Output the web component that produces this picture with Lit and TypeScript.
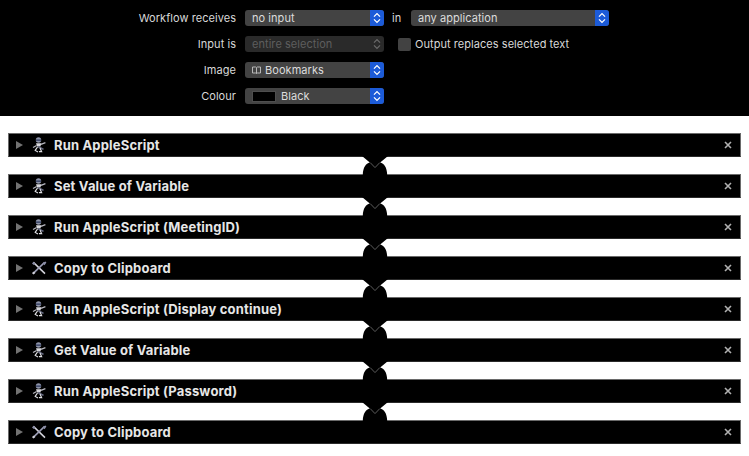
import { LitElement, html, css, svg } from "lit";
import { customElement } from "lit/decorators.js";

const arrows = (c: string) => svg`<svg class="arrows" width="8" height="12" viewBox="0 0 8 12"><path d="M1 4.6 4 1.6 7 4.6M1 7.4 4 10.4 7 7.4" fill="none" stroke="${c}" stroke-width="1.3"/></svg>`;

const robot = svg`<svg class="ico" width="14" height="16" viewBox="0 0 14 16">
<circle cx="6.5" cy="3" r="2.7" fill="#8d93a8"/>
<path d="M4 2.4h5v1.5H4z" fill="#3b4668"/>
<path d="M4 6.2h5.4l-1 3.2h-3.4z" fill="#d8d8dc"/>
<path d="M9 7.4 13.4 5.6M4.6 8.4 1 10.4" stroke="#b8b8c0" stroke-width="1.2" fill="none"/>
<path d="M6 9.5 11.5 12.4" stroke="#6a6e86" stroke-width="1.6" fill="none"/>
<path d="M5.5 10 3.2 13.4 6 15M8 11l1.6 3.6H7" stroke="#e0e0e4" stroke-width="1.2" fill="none"/>
</svg>`;

const tools = svg`<svg class="ico" width="16" height="14" viewBox="0 0 16 14">
<path d="M2.4 1.4 14 12.6" stroke="#d4d4dc" stroke-width="1.5"/>
<path d="M13.6 1.4 2 12.6" stroke="#9a9cb4" stroke-width="1.6"/>
<path d="M1 2.6 2.6.8 4.4 2.4 2.8 4zM11.6 2.2 14.4.4 15.4 1.6 13.6 4.2z" fill="#8c8ea8"/>
<path d="M1 12 3 10.4 4.4 12 2.4 13.6z" fill="#cfcfd8"/>
</svg>`;

const actions: [string, "r" | "t"][] = [
  ["Run AppleScript", "r"],
  ["Set Value of Variable", "r"],
  ["Run AppleScript (MeetingID)", "r"],
  ["Copy to Clipboard", "t"],
  ["Run AppleScript (Display continue)", "r"],
  ["Get Value of Variable", "r"],
  ["Run AppleScript (Password)", "r"],
  ["Copy to Clipboard", "t"],
];

const connector = svg`<svg class="conn" width="26" height="19" viewBox="0 0 26 19">
<path d="M0 0H26L24.5 1.2 18.2 6.4C22 7.4 25 11 25.2 19H.8C1 11 4 7.4 7.8 6.4L1.5 1.2Z" fill="#000"/>
<path d="M8.2 6.6 13 11.6 17.8 6.6" fill="none" stroke="#5c5c5c" stroke-width="1"/>
</svg>`;

@customElement("app-root")
export class AppRoot extends LitElement {
  static styles = css`
    :host { display: block; width: 749px; height: 456px; background: #fff; font-family: "Inter", "Liberation Sans", sans-serif; overflow: hidden; }
    .top { background: #000; height: 116px; box-sizing: border-box; padding-top: 10px; display: grid; grid-template-columns: 245px 139px 27px 198px; grid-auto-rows: 16px; row-gap: 10px; color: #d8d8d8; font-size: 11px; letter-spacing: .05px; align-items: center; }
    .lab { text-align: right; padding-right: 9px; white-space: nowrap; line-height: 16px; }
    .sel { height: 16px; background: #434343; border-radius: 3px; display: flex; align-items: center; justify-content: space-between; color: #dcdcdc; overflow: hidden; line-height: 16px; padding-left: 7px; box-sizing: border-box; }
    .val { display: flex; align-items: center; gap: 4px; white-space: nowrap; }
    .btn { width: 14px; height: 16px; background: #1c5bd8; display: flex; align-items: center; justify-content: center; }
    .sel.off { background: #2a2a2a; color: #5e5e5e; }
    .sel.off .btn { background: transparent; }
    .in { padding-left: 8px; }
    .chk { display: flex; align-items: center; gap: 4px; white-space: nowrap; grid-column: 3 / 5; padding-left: 14px; }
    .box { width: 13px; height: 13px; background: #424242; border-radius: 2px; display: block; flex: none; }
    .swatch { width: 24px; height: 11px; background: #000; border: 1px solid #4e4e4e; box-sizing: border-box; margin-right: 1px; }
    .list { display: flex; flex-direction: column; padding: 17px 8px 0 8px; }
    .bar { height: 24px; box-sizing: border-box; background: #000; border: 1px solid #6a6a6a; border-bottom-color: #2a2a2a; display: flex; align-items: center; color: #e6e6e6; font-weight: 700; font-size: 13px; letter-spacing: .17px; padding-left: 7px; }
    .tri { width: 0; height: 0; border-left: 7px solid #727272; border-top: 4.5px solid transparent; border-bottom: 4.5px solid transparent; flex: none; }
    .iw { width: 16px; margin-left: 8px; display: flex; justify-content: center; flex: none; }
    .name { margin-left: 7px; white-space: nowrap; flex: 1; }
    .x { width: 8px; height: 8px; margin-right: 8px; flex: none; }
    .gap { height: 17px; position: relative; }
    .conn { position: absolute; left: 354px; top: -1px; }
    .ico { display: block; }
  `;

  render() {
    return html`
      <div class="top">
        <div class="lab">Workflow receives</div>
        <div class="sel"><span class="val">no input</span><span class="btn">${arrows("#fff")}</span></div>
        <div class="in">in</div>
        <div class="sel"><span class="val">any application</span><span class="btn">${arrows("#fff")}</span></div>

        <div class="lab">Input is</div>
        <div class="sel off"><span class="val">entire selection</span><span class="btn">${arrows("#6a6a6a")}</span></div>
        <div class="chk"><span class="box"></span>Output replaces selected text</div>

        <div class="lab">Image</div>
        <div class="sel"><span class="val">
          <svg width="9" height="8" viewBox="0 0 9 8"><path d="M.5 1h3.2l.8.6.8-.6h3.2v6h-3.2l-.8.5-.8-.5H.5zM4.5 1.6v5.9" fill="none" stroke="#b8b8b8" stroke-width="1"/></svg>
          Bookmarks</span><span class="btn">${arrows("#fff")}</span></div>
        <div></div><div></div>

        <div class="lab">Colour</div>
        <div class="sel"><span class="val"><span class="swatch"></span>Black</span><span class="btn">${arrows("#fff")}</span></div>
      </div>
      <div class="list">
        ${actions.map(([n, k], i) => html`
          <div class="bar">
            <span class="tri"></span>
            <span class="iw">${k === "r" ? robot : tools}</span>
            <span class="name">${n}</span>
            <svg class="x" viewBox="0 0 8 8"><path d="M1 1 7 7M7 1 1 7" stroke="#b0b0b0" stroke-width="1.6"/></svg>
          </div>
          ${i < actions.length - 1 ? html`<div class="gap">${connector}</div>` : ""}
        `)}
      </div>
    `;
  }
}
